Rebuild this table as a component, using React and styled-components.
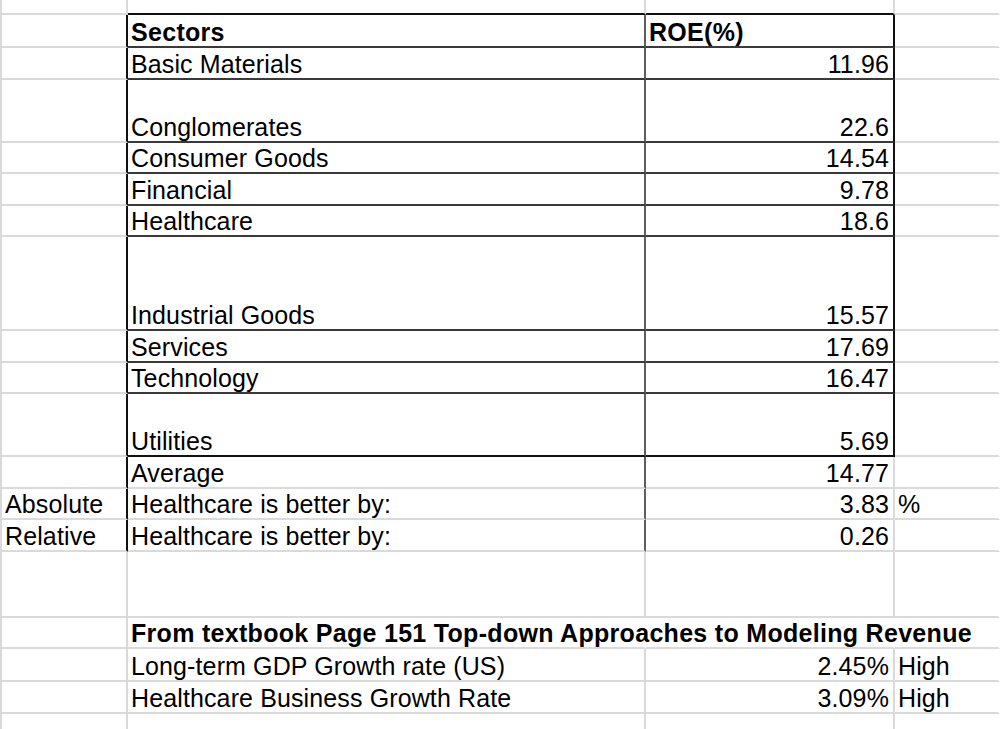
import React from "react";
import styled, { createGlobalStyle } from "styled-components";

const GRID = "#dadada";
const BLACK = "#111111";
const INNER = "#3a3a3a";
const DIVIDER = "#5e5e5e";

const Global = createGlobalStyle`
  html, body {
    margin: 0;
    padding: 0;
    background: #ffffff;
    overflow: hidden;
  }
  body {
    width: 1000px;
    height: 729px;
    font-family: "Liberation Sans", Arial, sans-serif;
    color: #000;
  }
`;

const Sheet = styled.div`
  display: flex;
  flex-direction: column;
  width: 1000px;
  box-sizing: border-box;
  border-left: 2px solid ${GRID};
`;

const Row = styled.div`
  display: grid;
  grid-template-columns: 126px 518px 249px 1fr;
  height: ${(p) => p.$h}px;
`;

const Cell = styled.div`
  box-sizing: border-box;
  display: flex;
  align-items: flex-end;
  justify-content: ${(p) => (p.$align === "right" ? "flex-end" : "flex-start")};
  padding: 0 4px 1px 3px;
  border-right: ${(p) => (p.$r ? `2px solid ${p.$r}` : "2px solid transparent")};
  border-bottom: 2px solid ${(p) => p.$b};
  font-size: 25px;
  line-height: 25px;
  font-weight: ${(p) => (p.$bold ? 700 : 400)};
  letter-spacing: ${(p) => (p.$bold ? "0.3px" : "0.12px")};
  white-space: nowrap;
  overflow: visible;
  min-width: 0;
`;

const kinds = {
  top: [
    { r: GRID, b: GRID },
    { r: GRID, b: BLACK },
    { r: GRID, b: BLACK },
    { r: null, b: GRID },
  ],
  table: [
    { r: BLACK, b: GRID },
    { r: DIVIDER, b: INNER },
    { r: BLACK, b: INNER },
    { r: null, b: GRID },
  ],
  tableLast: [
    { r: BLACK, b: GRID },
    { r: DIVIDER, b: BLACK },
    { r: BLACK, b: BLACK },
    { r: null, b: GRID },
  ],
  tail: [
    { r: BLACK, b: GRID },
    { r: DIVIDER, b: GRID },
    { r: GRID, b: GRID },
    { r: null, b: GRID },
  ],
  plain: [
    { r: GRID, b: GRID },
    { r: GRID, b: GRID },
    { r: GRID, b: GRID },
    { r: null, b: GRID },
  ],
  overflow: [
    { r: GRID, b: GRID },
    { r: null, b: GRID },
    { r: null, b: GRID },
    { r: null, b: GRID },
  ],
  end: [
    { r: GRID, b: "transparent" },
    { r: GRID, b: "transparent" },
    { r: GRID, b: "transparent" },
    { r: null, b: "transparent" },
  ],
};

const rows = [
  { h: 15, kind: "top", cells: ["", "", "", ""] },
  { h: 33, kind: "table", bold: true, cells: ["", "Sectors", "ROE(%)", ""], headerLeft: true },
  { h: 32, kind: "table", cells: ["", "Basic Materials", "11.96", ""] },
  { h: 63, kind: "table", cells: ["", "Conglomerates", "22.6", ""] },
  { h: 31, kind: "table", cells: ["", "Consumer Goods", "14.54", ""] },
  { h: 32, kind: "table", cells: ["", "Financial", "9.78", ""] },
  { h: 31, kind: "table", cells: ["", "Healthcare", "18.6", ""] },
  { h: 94, kind: "table", cells: ["", "Industrial Goods", "15.57", ""] },
  { h: 32, kind: "table", cells: ["", "Services", "17.69", ""] },
  { h: 31, kind: "table", cells: ["", "Technology", "16.47", ""] },
  { h: 63, kind: "tableLast", cells: ["", "Utilities", "5.69", ""] },
  { h: 32, kind: "tail", cells: ["", "Average", "14.77", ""] },
  { h: 31, kind: "tail", cells: ["Absolute", "Healthcare is better by:", "3.83", "%"] },
  { h: 32, kind: "tail", cells: ["Relative", "Healthcare is better by:", "0.26", ""] },
  { h: 66, kind: "plain", cells: ["", "", "", ""] },
  {
    h: 31,
    kind: "overflow",
    bold: true,
    cells: ["", "From textbook Page 151 Top-down Approaches to Modeling Revenue", "", ""],
  },
  { h: 33, kind: "plain", cells: ["", "Long-term GDP Growth rate (US)", "2.45%", "High"] },
  { h: 32, kind: "plain", cells: ["", "Healthcare Business Growth Rate", "3.09%", "High"] },
  { h: 40, kind: "end", cells: ["", "", "", ""] },
];

export default function App() {
  return (
    <>
      <Global />
      <Sheet>
        {rows.map((row, i) => (
          <Row key={i} $h={row.h}>
            {row.cells.map((text, j) => {
              const k = kinds[row.kind][j];
              const right = j === 2 && !row.headerLeft;
              return (
                <Cell key={j} $r={k.r} $b={k.b} $bold={row.bold} $align={right ? "right" : "left"}>
                  {text}
                </Cell>
              );
            })}
          </Row>
        ))}
      </Sheet>
    </>
  );
}
